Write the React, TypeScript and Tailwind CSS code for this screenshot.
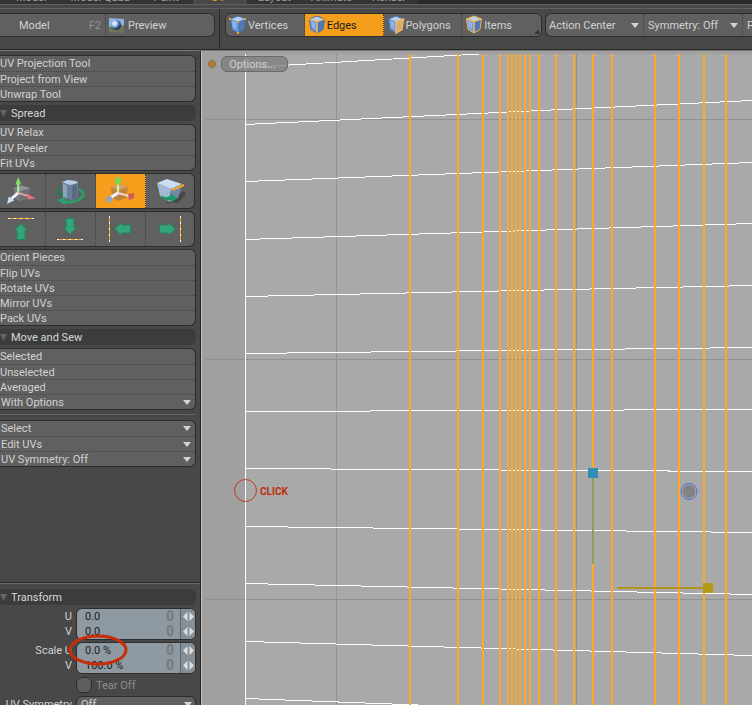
import React from 'react';

type Mode = 'vertices' | 'edges' | 'polygons' | 'items';

const seamColumns = [410, 458, 483, 500, 508, 512, 516, 520, 525, 530, 539, 556, 574, 593, 612, 655, 679, 704, 726];

// [y at the left border, y at x = 752]
const meshRows = [
  [124, 100],
  [181, 162],
  [239, 223],
  [296, 285],
  [353, 347],
  [411, 409],
  [468, 471],
  [526, 532],
  [583, 594],
  [641, 655],
  [698, 717],
];

const ModeIcon = ({ mode }: { mode: Mode }) => (
  <svg width="18" height="20" viewBox="0 0 18 20" className="shrink-0" aria-hidden="true">
    <path d="M1.500 4 9 6.500V18L3 14.500Z" fill="#6f9ddd" />
    <path d="M9 6.500 16.500 4 15 14.500 9 18Z" fill={mode === 'polygons' ? '#d9ad72' : '#5079b5'} />
    <path d="M1.500 4 9 1 16.500 4 9 6.500Z" fill="#b5d2f5" />
    <path d="M3 6 7 7.500V14L4 12Z" fill="#8db6ec" />
    <path
      d="M1.500 4 9 1 16.500 4 15 14.500 9 18 3 14.500Z"
      fill="none"
      stroke={mode === 'items' ? '#f0b04e' : '#486d9f'}
      strokeWidth="1"
    />
    {mode === 'vertices' && (
      <g fill="#f5a32a">
        <rect x="0" y="3" width="2" height="2" />
        <rect x="15" y="3" width="2" height="2" />
        <rect x="8" y="6" width="2" height="2" />
        <rect x="8" y="17" width="2" height="2" />
      </g>
    )}
    {mode !== 'vertices' && (
      <path
        d={mode === 'polygons' ? 'M9 6.500 16.500 4 15 14.500 9 18Z' : 'M1.500 4 9 6.500 16.500 4M9 6.500V18'}
        fill="none"
        stroke="#f3b765"
        strokeWidth="1.500"
      />
    )}
  </svg>
);

const PreviewIcon = () => (
  <svg width="17" height="17" viewBox="0 0 17 17" className="shrink-0" aria-hidden="true">
    <defs>
      <radialGradient id="ball" cx=".35" cy=".35" r=".65">
        <stop offset="0" stopColor="#fff" />
        <stop offset=".4" stopColor="#a9c6f2" />
        <stop offset=".75" stopColor="#3d5d90" />
        <stop offset="1" stopColor="#1b2638" />
      </radialGradient>
    </defs>
    <path d="M1 1 16 2V11H1Z" fill="#8db5e4" />
    <path d="M1 10 16 8V16L1 15Z" fill="#6c7459" />
    <circle cx="8" cy="8" r="5" fill="url(#ball)" />
  </svg>
);

const Caret = () => (
  <svg width="8" height="5" viewBox="0 0 8 5" className="shrink-0" aria-hidden="true">
    <path d="M0 0H8L4 5Z" fill="#d4d4d4" />
  </svg>
);

const MoveIcon = () => (
  <svg width="30" height="28" viewBox="0 0 32 30" aria-hidden="true">
    <path d="M8 12 17 9 26 12 23 23 14 26 9 22Z" fill="#777b80" />
    <path d="M8 12 17 9 26 12 16 15Z" fill="#939699" />
    <path d="M14 26 16 15 26 12 23 23Z" fill="#6c7075" />
    <path d="M13 16V7" stroke="#b5eda2" strokeWidth="2" />
    <path d="M10 8 13 0 16 8Z" fill="#84df63" />
    <path d="M13 17 26 21" stroke="#e8a0a4" strokeWidth="2" />
    <path d="M23 18 32 23 23 24Z" fill="#dc7277" />
    <path d="M13 17 6 23" stroke="#f1f6fd" strokeWidth="3" />
    <path d="M3 21 9 25 1 29Z" fill="#c9def7" />
  </svg>
);

const RotateIcon = () => (
  <svg width="32" height="30" viewBox="0 0 32 30" aria-hidden="true">
    <path d="M6 11C3 14 4 18 9 20" fill="none" stroke="#1d8053" strokeWidth="2" />
    <path d="M8 6 14 4 22 5 24 7V21L18 24 9 22Z" fill="#6b8199" />
    <path d="M8 6 14 4 22 5 24 7 16 9Z" fill="#b7cde6" />
    <path d="M9 8 13 9V22L9 21Z" fill="#8ba3bd" />
    <path d="M18 10 23 8V21L18 23Z" fill="#566b82" />
    <path d="M25 13C34 17 28 27 11 26" fill="none" stroke="#2e9e69" strokeWidth="3" />
    <path d="M3 24 12 21 11 29Z" fill="#2e9e69" />
  </svg>
);

const ScaleIcon = () => (
  <svg width="32" height="30" viewBox="0 0 32 30" aria-hidden="true">
    <path d="M7 11 15 8 24 11 22 22 13 25 8 21Z" fill="#bd843e" />
    <path d="M7 11 15 8 24 11 15 14Z" fill="#d6a366" />
    <path d="M14 17V7" stroke="#c8f0b5" strokeWidth="2" />
    <path d="M11 2 14 1 17 2V7L14 9 11 7Z" fill="#79d84f" />
    <path d="M14 17 25 20" stroke="#f0d5c4" strokeWidth="2" />
    <path d="M24 18 30 17 30 22 25 24Z" fill="#ce5b63" />
    <path d="M14 17 6 22" stroke="#f3f6fb" strokeWidth="3" />
    <path d="M2 21 7 20 9 24 5 27 2 25Z" fill="#8fa6c4" />
  </svg>
);

const FlattenIcon = () => (
  <svg width="32" height="30" viewBox="0 0 32 30" aria-hidden="true">
    <path d="M12 27 30 15 32 18 24 27Z" fill="#484848" />
    <path d="M3 7 17 13 16 26 6 20Z" fill="#a2b9d3" />
    <path d="M17 13 28 9 24 22 16 26Z" fill="#708aa8" />
    <path d="M3 7 13 3 28 8 17 13Z" fill="#c9def3" />
    <path d="M18 14 30 9" stroke="#f6a52e" strokeWidth="2" />
    <path d="M7 19C11 22 13 21 16 20V17L23 22 17 27V24C12 25 8 23 7 19Z" fill="#1f9868" />
  </svg>
);

const ArrowIcon = ({ dir }: { dir: 'up' | 'down' | 'left' | 'right' }) => {
  const turn = { up: 0, right: 90, down: 180, left: 270 }[dir];
  return (
    <svg width="28" height="28" viewBox="0 0 28 28" className="shrink-0" aria-hidden="true">
      <g transform={`rotate(${turn} 14 14)`}>
        <rect x="1" y="3" width="26" height="1" fill="#f8a020" />
        {[1, 7, 13, 19, 25].map((x) => (
          <rect key={x} x={x} y="3" width="2" height="1" fill="#fff" />
        ))}
        <path d="M14 8.500 20.500 15.500H18V24.500H10V15.500H7.500Z" fill="#34a578" stroke="#258260" />
      </g>
    </svg>
  );
};

const Header = ({ children }: { children: React.ReactNode }) => (
  <h2 className="flex h-4 items-center gap-1 rounded-r-md bg-[#3c3c3c] text-[#d8d8d8]">
    <svg width="7" height="7" viewBox="0 0 7 7" aria-hidden="true">
      <path d="M0 0H7L3.500 7Z" fill="#666" />
    </svg>
    <span>{children}</span>
  </h2>
);

const ToolList = ({ items, menus = [] }: { items: string[]; menus?: string[] }) => (
  <div className="flex flex-col overflow-hidden rounded-r-md border border-l-0 border-[#2d2d2d] bg-[#606060]">
    {items.map((item) => (
      <button
        key={item}
        className="flex h-[15px] items-center justify-between border-t border-dotted border-[#444] pr-1 text-left first:border-t-0"
      >
        <span className={menus.includes(item) ? 'pl-px' : ''}>{item}</span>
        {menus.includes(item) && <Caret />}
      </button>
    ))}
  </div>
);

const IconRow = ({ children }: { children: React.ReactNode }) => (
  <div className="mr-px grid h-9 grid-cols-[46px_50px_50px_1fr] overflow-hidden rounded-r-md border border-l-0 border-[#2d2d2d] bg-[#606060]">
    {children}
  </div>
);

const IconButton = ({ label, active, children }: { label: string; active?: boolean; children: React.ReactNode }) => (
  <button
    aria-label={label}
    className={`flex items-center justify-center overflow-hidden border-r border-dotted border-[#404040] pr-px first:pr-[3px] last:border-r-0 last:pr-0 ${active ? 'bg-[#f59e1b]' : ''}`}
  >
    {children}
  </button>
);

const NumberFields = ({ fields }: { fields: { id: string; label: string; value: string }[] }) => (
  <div className="flex gap-1">
    <div className="flex flex-1 flex-col py-px text-right">
      {fields.map((f) => (
        <label key={f.id} htmlFor={f.id} className="h-[15px] leading-[15px]">
          {f.label}
        </label>
      ))}
    </div>
    <div className="w-[120px] overflow-hidden rounded-md border border-[#2d2d2d] bg-[#8f99a2]">
      {fields.map((f) => (
        <div key={f.id} className="flex h-[15px] items-center">
          <input
            id={f.id}
            defaultValue={f.value}
            className="h-[15px] w-0 flex-1 bg-transparent pl-2 text-[#202020] outline-none"
          />
          <button aria-label={`Key ${f.id}`} className="w-5 text-center text-sm leading-[15px] font-black text-[#787c80]">
            0
          </button>
          <button
            aria-label={`Adjust ${f.id}`}
            className="flex h-[15px] w-[15px] items-center justify-center border-l border-[#59616a] bg-[#858f98]"
          >
            <svg width="11" height="9" viewBox="0 0 11 9" aria-hidden="true">
              <path d="M4.500 0V9L0 4.500ZM6.500 0V9L11 4.500Z" fill="#dedede" />
            </svg>
          </button>
        </div>
      ))}
    </div>
  </div>
);

const Tabs = ({ names, className }: { names: string[]; className: string }) => (
  <div className={`flex h-1 items-end overflow-hidden rounded-b-sm bg-[#343434] leading-3 text-[#a0a0a0] ${className}`}>
    {names.map((name) => (
      <a key={name} href="#" className="h-3">
        {name}
      </a>
    ))}
  </div>
);

const Toolbar = () => (
  <div className="flex h-[41px] shrink-0 border-b border-[#292929]">
    <div className="w-[220px] shrink-0 border-r border-[#2a2a2a] pt-1">
      <div className="flex h-6 w-[215px] overflow-hidden rounded-r-md border border-l-0 border-[#2d2d2d] bg-[#606060]">
        <button className="flex w-[106px] items-center justify-between border-r border-dotted border-[#404040] pr-1 pl-[19px]">
          <span>Model</span>
          <span className="text-[#929292]">F2</span>
        </button>
        <button className="flex items-center gap-[3px] pl-0.5">
          <PreviewIcon />
          Preview
        </button>
      </div>
    </div>
    <div className="flex min-w-0 flex-1 gap-[3px] overflow-hidden pt-1 pl-[5px]">
      <div className="grid h-6 w-[317px] shrink-0 grid-cols-4 divide-x divide-dotted divide-[#404040] overflow-hidden rounded-md border border-[#2d2d2d] bg-[#606060]">
        <button className="flex items-center gap-px pl-[3px]">
          <ModeIcon mode="vertices" />
          Vertices
        </button>
        <button className="flex items-center gap-px bg-[#f59e1b] pl-[3px] text-[#1c1c1c]">
          <ModeIcon mode="edges" />
          Edges
        </button>
        <button className="flex items-center gap-px pl-[3px]">
          <ModeIcon mode="polygons" />
          Polygons
        </button>
        <button className="relative flex items-center gap-px pl-[3px]">
          <ModeIcon mode="items" />
          Items
          <svg width="5" height="5" className="absolute right-0.5 bottom-0.5" aria-hidden="true">
            <path d="M5 0V5H0Z" fill="#333" />
          </svg>
        </button>
      </div>
      <div className="flex h-6 min-w-0 flex-1 divide-x divide-dotted divide-[#404040] overflow-hidden rounded-l-md border border-r-0 border-[#2d2d2d] bg-[#606060]">
        <button className="flex w-[98px] shrink-0 items-center justify-between pr-1 pl-[3px]">
          Action Center
          <Caret />
        </button>
        <button className="flex w-[99px] shrink-0 items-center justify-between pr-1 pl-1">
          Symmetry: Off
          <Caret />
        </button>
        <button className="shrink-0 pl-1 text-left">Falloff</button>
      </div>
    </div>
  </div>
);

const Sidebar = () => (
  <aside className="flex w-[201px] shrink-0 flex-col border-r border-[#242424]">
    <div className="flex flex-1 flex-col gap-[3px] border-b border-[#2a2a2a] pt-1 pr-1">
      <ToolList items={['UV Projection Tool', 'Project from View', 'Unwrap Tool']} />
      <Header>Spread</Header>
      <ToolList items={['UV Relax', 'UV Peeler', 'Fit UVs']} />
      <div className="-my-px flex flex-col gap-0.5">
        <IconRow>
          <IconButton label="Move"><MoveIcon /></IconButton>
          <IconButton label="Rotate"><RotateIcon /></IconButton>
          <IconButton label="Scale" active><ScaleIcon /></IconButton>
          <IconButton label="Flatten"><FlattenIcon /></IconButton>
        </IconRow>
        <IconRow>
          <IconButton label="Align up"><ArrowIcon dir="up" /></IconButton>
          <IconButton label="Align down"><ArrowIcon dir="down" /></IconButton>
          <IconButton label="Align left"><ArrowIcon dir="left" /></IconButton>
          <IconButton label="Align right"><ArrowIcon dir="right" /></IconButton>
        </IconRow>
      </div>
      <ToolList items={['Orient Pieces', 'Flip UVs', 'Rotate UVs', 'Mirror UVs', 'Pack UVs']} />
      <Header>Move and Sew</Header>
      <ToolList items={['Selected', 'Unselected', 'Averaged', 'With Options']} menus={['With Options']} />
      <hr className="mt-px mb-0.5 border-[#646464]" />
      <ToolList items={['Select', 'Edit UVs', 'UV Symmetry: Off']} menus={['Select', 'Edit UVs', 'UV Symmetry: Off']} />
    </div>
    <div className="flex h-[122px] shrink-0 flex-col gap-0.5 overflow-hidden border-t border-[#696969] pt-[5px] pr-1">
      <div className="pb-px">
        <Header>Transform</Header>
      </div>
      <NumberFields
        fields={[
          { id: 'pos-u', label: 'U', value: '0.0' },
          { id: 'pos-v', label: 'V', value: '0.0' },
        ]}
      />
      <div className="relative">
        <NumberFields
          fields={[
            { id: 'scale-u', label: 'Scale U', value: '0.0 %' },
            { id: 'scale-v', label: 'V', value: '100.0 %' },
          ]}
        />
        <svg width="60" height="32" className="pointer-events-none absolute -top-2 left-[68px]" aria-hidden="true">
          <ellipse cx="30" cy="16" rx="28" ry="14" fill="none" stroke="#c62d08" strokeWidth="3" />
        </svg>
      </div>
      <label className="flex h-[18px] shrink-0 items-center gap-1 pl-[76px] text-[#8f8f8f]">
        <input type="checkbox" className="size-4 appearance-none rounded-md border border-[#2d2d2d] bg-[#5e5e5e]" />
        Tear Off
      </label>
      <div className="flex shrink-0 items-center gap-1">
        <label htmlFor="uv-symmetry" className="flex-1 text-right whitespace-nowrap">
          UV Symmetry
        </label>
        <div className="relative w-[120px]">
          <select
            id="uv-symmetry"
            className="block h-4 w-full appearance-none rounded-md border border-[#2d2d2d] bg-[#606060] pl-1"
          >
            <option>Off</option>
          </select>
          <span className="pointer-events-none absolute top-1.5 right-1">
            <Caret />
          </span>
        </div>
      </div>
    </div>
  </aside>
);

// the drawing keeps window coordinates; the viewBox moves it to the panel's own origin
const UVCanvas = () => (
  <svg
    className="absolute inset-0 size-full"
    viewBox="202 51 550 654"
    preserveAspectRatio="xMinYMin slice"
    role="img"
    aria-label="UV mesh"
  >
    <g shapeRendering="crispEdges">
      <rect x="202" y="51" width="550" height="654" fill="#a0a0a0" />
      <rect x="246" y="54" width="506" height="651" fill="#a9a9a9" />
      <path d="M336.500 54V705M576.500 54V705M205 119.500H752M205 359.500H752M205 599.500H752" stroke="#919191" />
      <path d="M245.500 54V705M245 68 272 66 479 54" fill="none" stroke="#fff" />
      {meshRows.map(([left, right]) => (
        <path key={left} d={`M245 ${left}.5 752 ${right}.5`} stroke="#fff" />
      ))}
      {seamColumns.map((x) => (
        <path key={x} d={`M${x} 54V705`} stroke="#ffa726" strokeWidth="2" />
      ))}
      <path d="M593 478V564" stroke="#8aa05f" strokeWidth="2" />
      <rect x="588" y="468" width="10" height="10" fill="#2d91a8" />
      <path d="M590 471H595M591 475H597" stroke="#3884d8" strokeWidth="2" />
      <path d="M617 588H704" stroke="#b3951c" strokeWidth="2" />
      <rect x="703" y="583" width="10" height="10" fill="#b49a16" />
    </g>
    <circle cx="689" cy="491.500" r="6.500" fill="#828282" />
    <circle cx="689" cy="491.500" r="8" fill="none" stroke="#4670e6" />
    <circle cx="245.500" cy="490.500" r="11" fill="none" stroke="#bd3d1d" />
    <text x="260" y="495" fontSize="10" fontWeight="700" fill="#c12a08">
      CLICK
    </text>
  </svg>
);

export default function App() {
  return (
    <div className="flex h-screen w-full flex-col overflow-hidden bg-[#484848] font-[Roboto,'Liberation_Sans',sans-serif] text-[11px] leading-[15px] text-[#d2d2d2]">
      <nav className="flex h-1 shrink-0 overflow-hidden bg-[#2b2b2b]" aria-label="Layouts">
        <Tabs className="w-[193px] gap-6 pl-4" names={['Model', 'Model Quad', 'Paint']} />
        <div className="flex h-1 w-[54px] items-end overflow-hidden bg-[#484848] pl-[18px] leading-3 text-[#f59e1b]">
          <a href="#" className="h-3">UV</a>
        </div>
        <Tabs className="w-[171px] gap-5 pl-[11px]" names={['Layout', 'Animate', 'Render']} />
      </nav>
      <div className="h-[5px] shrink-0 border-y border-[#626262]" />
      <Toolbar />
      <div className="flex min-h-0 flex-1 border-t border-[#777]">
        <Sidebar />
        <main className="relative min-w-0 flex-1 overflow-hidden border-l border-[#c4c4c4] bg-[#a0a0a0]">
          <UVCanvas />
          <div className="absolute top-[5px] left-[6px] flex items-center gap-1">
            <span className="size-2 rounded-full border border-[#8a7350] bg-[#b9792f]" />
            <button className="ml-px h-4 w-[67px] rounded-md border border-[#6a6a6a] bg-[#808080]/80 pr-1 text-[#d0d0d0]">
              Options...
            </button>
          </div>
        </main>
      </div>
    </div>
  );
}
